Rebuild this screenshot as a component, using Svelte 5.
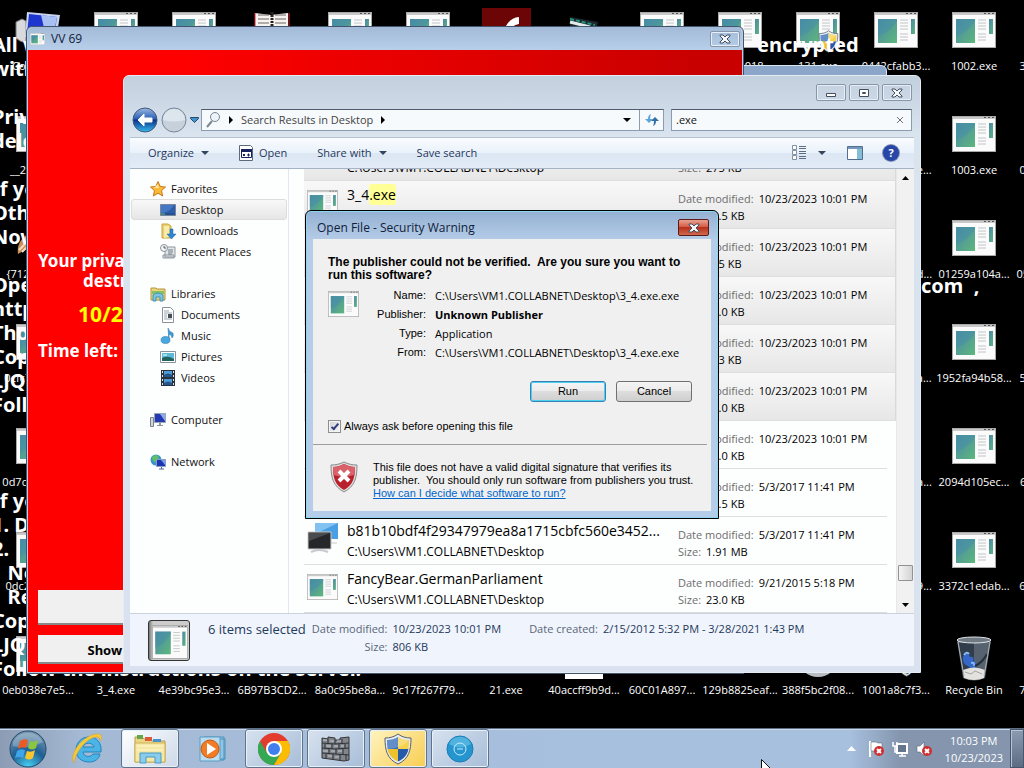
<script>
	let query = $state('.exe');
	let alwaysAsk = $state(true);

	const colWidth = 78;
	const rowHeight = 104;

	const desktopIcons = [
		{ col: 0, row: 0, label: 'Computer', kind: 'computer' },
		{ col: 1, row: 0, label: '', kind: 'exe' },
		{ col: 2, row: 0, label: '', kind: 'exe' },
		{ col: 3, row: 0, label: '', kind: 'notebook' },
		{ col: 4, row: 0, label: '', kind: 'exe' },
		{ col: 5, row: 0, label: '', kind: 'exe' },
		{ col: 6, row: 0, label: '', kind: 'flash' },
		{ col: 7, row: 0, label: '', kind: 'clapper' },
		{ col: 8, row: 0, label: '', kind: 'exe' },
		{ col: 9, row: 0, label: '..05-2018', kind: 'exe' },
		{ col: 10, row: 0, label: '131.exe', kind: 'admin' },
		{ col: 11, row: 0, label: '0442cfabb3...', kind: 'exe' },
		{ col: 12, row: 0, label: '1002.exe', kind: 'exe' },
		{ col: 13, row: 0, label: '31c46bb9a...', kind: 'exe' },
		{ col: 0, row: 1, label: '__2018.exe', kind: 'exe' },
		{ col: 11, row: 1, label: '0a71c5bd2e...', kind: 'exe' },
		{ col: 12, row: 1, label: '1003.exe', kind: 'exe' },
		{ col: 13, row: 1, label: '01c46bb9a...', kind: 'exe' },
		{ col: 0, row: 2, label: '{71257279...', kind: 'brush' },
		{ col: 11, row: 2, label: '0bd71c5b2d...', kind: 'exe' },
		{ col: 12, row: 2, label: '01259a104a...', kind: 'exe' },
		{ col: 13, row: 2, label: '05c46bb9a0...', kind: 'exe' },
		{ col: 0, row: 3, label: '0cfc71be52...', kind: 'exe' },
		{ col: 11, row: 3, label: '0e71c5bd2a...', kind: 'exe' },
		{ col: 12, row: 3, label: '1952fa94b58...', kind: 'exe' },
		{ col: 13, row: 3, label: '56c46bb9a...', kind: 'exe' },
		{ col: 0, row: 4, label: '0d7c71be52...', kind: 'exe' },
		{ col: 11, row: 4, label: '1b71c5bd2a...', kind: 'exe' },
		{ col: 12, row: 4, label: '2094d105ec...', kind: 'exe' },
		{ col: 13, row: 4, label: '6cc46bb9a...', kind: 'exe' },
		{ col: 0, row: 5, label: '0dc271be5...', kind: 'exe' },
		{ col: 11, row: 5, label: '2b71c5bda9...', kind: 'exe' },
		{ col: 12, row: 5, label: '3372c1edab...', kind: 'exe' },
		{ col: 13, row: 5, label: '6dc46bb9a...', kind: 'exe' },
		{ col: 0, row: 6, label: '0eb038e7e5...', kind: 'exe' },
		{ col: 1, row: 6, label: '3_4.exe', kind: 'exe' },
		{ col: 2, row: 6, label: '4e39bc95e3...', kind: 'exe' },
		{ col: 3, row: 6, label: '6B97B3CD2...', kind: 'exe' },
		{ col: 4, row: 6, label: '8a0c95be8a...', kind: 'exe' },
		{ col: 5, row: 6, label: '9c17f267f79...', kind: 'exe' },
		{ col: 6, row: 6, label: '21.exe', kind: 'exe' },
		{ col: 7, row: 6, label: '40accff9b9d...', kind: 'page' },
		{ col: 8, row: 6, label: '60C01A897...', kind: 'exe' },
		{ col: 9, row: 6, label: '129b8825eaf...', kind: 'exe' },
		{ col: 10, row: 6, label: '388f5bc2f08...', kind: 'disc' },
		{ col: 11, row: 6, label: '1001a8c7f3...', kind: 'admin' },
		{ col: 12, row: 6, label: 'Recycle Bin', kind: 'bin' },
		{ col: 13, row: 6, label: '7dc46bb9a...', kind: 'exe' }
	];

	const note = [
		'All w', 'with', '', 'Priv', 'dele', '', 'If yo', 'Othe', 'Now', '', 'Oper', 'http', 'Tho',
		'Cop', 'LJQ', 'Follo', '', '', '', 'If yo', '1. D', '2.', '   No', '   Re', 'Cop', 'LJQ',
		'Follow the instructions on the server.'
	].join('\n');

	const navGroups = [
		{ name: 'Favorites', icon: 'star', items: [
			{ name: 'Desktop', icon: 'desktop', current: true },
			{ name: 'Downloads', icon: 'downloads' },
			{ name: 'Recent Places', icon: 'recent' }
		] },
		{ name: 'Libraries', icon: 'libraries', items: [
			{ name: 'Documents', icon: 'documents' },
			{ name: 'Music', icon: 'music' },
			{ name: 'Pictures', icon: 'pictures' },
			{ name: 'Videos', icon: 'videos' }
		] },
		{ name: 'Computer', icon: 'computer', items: [] },
		{ name: 'Network', icon: 'network', items: [] }
	];

	const folder = 'C:\\Users\\VM1.COLLABNET\\Desktop';
	const files = [
		{ name: '21', date: '10/23/2023 10:01 PM', size: '275 KB', selected: true },
		{ name: '3_4', ext: '.exe', date: '10/23/2023 10:01 PM', size: '22.5 KB', selected: true },
		{ name: '131', ext: '.exe', date: '10/23/2023 10:01 PM', size: '315 KB', selected: true },
		{ name: '1002', ext: '.exe', date: '10/23/2023 10:01 PM', size: '64.0 KB', selected: true },
		{ name: '1003', ext: '.exe', date: '10/23/2023 10:01 PM', size: '303 KB', selected: true },
		{ name: '2018', ext: '.exe', date: '10/23/2023 10:01 PM', size: '68.0 KB', selected: true },
		{ name: 'VV', ext: '.exe', date: '10/23/2023 10:01 PM', size: '72.0 KB' },
		{ name: '6B97B3CD2', date: '5/3/2017 11:41 PM', size: '38.5 KB' },
		{ name: 'b81b10bdf4f29347979ea8a1715cbfc560e3452...', date: '5/3/2017 11:41 PM', size: '1.91 MB', icon: 'screens' },
		{ name: 'FancyBear.GermanParliament', date: '9/21/2015 5:18 PM', size: '23.0 KB' }
	];

	const details = [
		{ label: 'Name:', value: 'C:\\Users\\VM1.COLLABNET\\Desktop\\3_4.exe.exe' },
		{ label: 'Publisher:', value: 'Unknown Publisher', strong: true },
		{ label: 'Type:', value: 'Application' },
		{ label: 'From:', value: 'C:\\Users\\VM1.COLLABNET\\Desktop\\3_4.exe.exe' }
	];

	const tasks = [
		{ name: 'Internet Explorer', icon: 'ie' },
		{ name: 'Windows Explorer', icon: 'explorer', state: 'active' },
		{ name: 'Windows Media Player', icon: 'player' },
		{ name: 'Google Chrome', icon: 'chrome', state: 'open' },
		{ name: 'Firewall', icon: 'wall', state: 'open' },
		{ name: 'User Account Control', icon: 'shield', state: 'alert' },
		{ name: 'Clock', icon: 'clock', state: 'open' }
	];
</script>

{#snippet exe(width, height)}
	<svg {width} {height} viewBox="0 0 44 36" preserveAspectRatio="none" aria-hidden="true">
		<rect x="0.5" y="0.5" width="43" height="35" fill="#fbfbfb" stroke="#a9a9a9" />
		<path d="M1 1h42v2H1z" fill="#c9c9cb" />
		<path d="M32 1h2v1h-2zM36 1h2v1h-2zM40 1h2v1h-2z" fill="#555" />
		<rect x="4" y="7" width="19" height="24" fill="url(#exe-pic)" />
		<path d="M4 24Q16 20 23 9V7H4z" fill="#4690a8" opacity=".55" />
		<path d="M26 8h8M26 11h8M26 14h8M26 17h8M26 22h8M26 25h8M26 28h8" stroke="#c2c4c6" />
		<rect x="37" y="7" width="4" height="15" fill="url(#exe-pic)" />
	</svg>
{/snippet}

{#snippet shield(size)}
	<svg width={size} height={size} viewBox="0 0 32 32" aria-hidden="true">
		<path d="M16 1c4 3 8 4 13 4 0 12-2 21-13 26C5 26 3 17 3 5c5 0 9-1 13-4z" fill="#e8ecf2" stroke="#555f70" />
		<path d="M16 4v12H5.500C5 13 5 10 5 7c4 0 8-1 11-3z" fill="#2f68b8" />
		<path d="M16 4v12h10.500C27 13 27 10 27 7c-4 0-8-1-11-3z" fill="#f5d24c" />
		<path d="M16 16v12.500C10 26 7 22 5.500 16z" fill="#eec22f" />
		<path d="M16 16v12.500C22 26 25 22 26.500 16z" fill="#245aa8" />
		<path d="M5 7c4 0 8-1 11-3 3 2 7 3 11 3-4 6-14 9-22 9z" fill="#fff" opacity=".25" />
	</svg>
{/snippet}

{#snippet cross()}
	<svg width="12" height="10" viewBox="0 0 12 10" aria-hidden="true">
		<path d="M1 1h3l2 2 2-2h3v1L8 5l3 3v1H8L6 7 4 9H1V8l3-3-3-3z" fill="#f4f7fa" stroke="#434e60" />
	</svg>
{/snippet}

{#snippet desktopIcon(kind)}
	{#if kind === 'exe'}
		{@render exe(44, 36)}
	{:else if kind === 'admin'}
		{@render exe(44, 36)}
		<span class="overlay">{@render shield(23)}</span>
	{:else if kind === 'computer'}
		<svg width="46" height="36" viewBox="0 0 46 36">
			<path d="M1 10l6-3 4 2v22l-6-2-4-3z" fill="#d8dadd" stroke="#777" />
			<path d="M12 0l33 3-4 25-31-3z" fill="#c9d4ee" />
			<path d="M14 2l28 3-3 20-27-3z" fill="#1c36cf" />
			<path d="M26 3l16 2-3 16-9-1z" fill="#a9c0f2" />
		</svg>
	{:else if kind === 'notebook'}
		<svg width="36" height="40" viewBox="0 0 36 40">
			<path d="M1 1l16 2 17-2v38H1z" fill="#f6f3f0" />
			<path d="M1 1v38M35 1v38" stroke="#d42222" stroke-width="1" />
			<path d="M4 3h11M4 7h11M4 11h11M4 15h11M21 3h11M21 7h11M21 11h11M21 15h11" stroke="#6b6665" />
			<path d="M18 0v38" stroke="#222" stroke-width="3" stroke-dasharray="2 1" />
		</svg>
	{:else if kind === 'flash'}
		<svg class="raised" width="49" height="46" viewBox="0 0 49 46">
			<path d="M0 0h49v46H0z" fill="#6b0506" />
			<path d="M37 9v7q-8 1-9 8h6v6h-8q-3 12-14 12v-7q7 0 9-9 4-16 16-17z" fill="#fff" />
		</svg>
	{:else if kind === 'clapper'}
		<svg width="44" height="36" viewBox="0 0 44 36">
			<path d="M8 5l28 5-1 5H8z" fill="#1e2730" />
			<path d="M8 10l20 5" stroke="#e3ebea" stroke-width="3" />
			<path d="M8 7l25 6" stroke="#23967f" stroke-width="2" stroke-dasharray="4 2" />
		</svg>
	{:else if kind === 'brush'}
		<svg width="44" height="36" viewBox="0 0 44 36">
			<path d="M2 34Q0 22 12 14l4 12z" fill="#c98e58" />
			<path d="M3 30l10-10M6 32l8-8" stroke="#f3dcc0" stroke-width="2" />
		</svg>
	{:else if kind === 'page'}
		<svg width="38" height="43" viewBox="0 0 38 43"><path d="M0 0h38v43H0z" fill="#fff" /></svg>
	{:else if kind === 'disc'}
		<svg width="42" height="42" viewBox="0 0 42 42"><circle cx="21" cy="21" r="20" fill="#b9bdc2" /></svg>
	{:else if kind === 'bin'}
		<svg width="38" height="46" viewBox="0 0 38 46">
			<path d="M2 4h34l-6 38q-11 5-22 0z" fill="#5a6570" />
			<path d="M4 7h15v36q-7 0-10-2z" fill="#323d4b" />
			<path d="M19 8h14l-5 33-9 2z" fill="#56626f" />
			<ellipse cx="19" cy="4" rx="17" ry="3" fill="#6f7a84" stroke="#dfe4e8" />
			<path d="M8 21q4-8 7 0 5-1 3 4 5 0 3 7-5 2-8-2-6-2-5-9z" fill="#3467c8" />
			<path d="M9 19q3-4 5-1M16 27q4-1 3 3" stroke="#8ab6f1" stroke-width="2" fill="none" />
			<path d="M20 30q8-4 12-12" stroke="#252e3a" stroke-width="2" fill="none" />
			<path d="M8 34q11-5 22 0l-1 8q-10 4-20 0z" fill="#e4e2df" />
			<path d="M10 36l6 2 4-3 7 3" stroke="#a7a5a2" fill="none" />
			<path d="M3 6l6 34M35 6l-6 34" stroke="#aab2ba" />
		</svg>
	{/if}
{/snippet}

{#snippet navIcon(kind)}
	<svg width="16" height="16" viewBox="0 0 16 16" aria-hidden="true">
		{#if kind === 'star'}
			<path d="M8 .5l2.200 5 5.300.5-4 3.700 1.200 5.300L8 12.200 3.300 15l1.200-5.300-4-3.700 5.300-.5z" fill="#fbb938" stroke="#c8771a" />
			<path d="M8 3l1 4-5 0z" fill="#ffe9a0" />
		{:else if kind === 'desktop'}
			<path d="M.5 2.500h15v11H.5z" fill="#2d5cab" stroke="#75869c" />
			<path d="M1 11Q9 11 14 3H1z" fill="#4477c4" />
			<path d="M1 12h14" stroke="#22457d" /><path d="M1 12h4" stroke="#5dbf6a" />
		{:else if kind === 'downloads'}
			<path d="M2 1h6l3 2v12H2z" fill="#e9cf70" stroke="#c8a63d" />
			<path d="M4 3h5v11l-5 1z" fill="#f8eaa8" />
			<path d="M10 6h3v5h3l-4.500 5L7 11h3z" fill="#2e86d2" stroke="#1c62a8" stroke-width=".5" />
		{:else if kind === 'recent'}
			<path d="M5 3h10v10H5zM3 11h11v3H3z" fill="#e3e6e8" stroke="#8e979f" />
			<path d="M8 6h5M8 8h5M8 10h4" stroke="#6d7b88" />
			<circle cx="4" cy="4" r="3.500" fill="#f3f5f6" stroke="#8b949c" /><path d="M4 2v2h2" stroke="#555" fill="none" />
		{:else if kind === 'libraries'}
			<path d="M1 2h5l1 1h8v11H1z" fill="#ecd47b" stroke="#b49540" />
			<path d="M2 5h12v3H2z" fill="#86c163" />
			<path d="M3 15V9q5-4 10 0v6h-3v-4H6v4z" fill="#7cc6e3" stroke="#3e93b8" />
		{:else if kind === 'documents'}
			<path d="M2.500.5h8l3 3v12h-11z" fill="#fff" stroke="#88939e" />
			<path d="M4 4h5M4 6h8M4 8h3M4 10h3M4 12h8" stroke="#9aa5af" /><path d="M8 7h4v4H8z" fill="#45505b" />
		{:else if kind === 'music'}
			<path d="M8 0q1 4 5 5 1 3-1 5 0-3-3-4v6z" fill="#3f9bd8" stroke="#236ca5" stroke-width=".5" />
			<ellipse cx="5.500" cy="12" rx="4.500" ry="3.500" fill="#4aa8e0" stroke="#236ca5" stroke-width=".5" />
		{:else if kind === 'pictures'}
			<path d="M.5 2.500h15v11H.5z" fill="#fff" stroke="#87929d" />
			<path d="M2 4h12v8H2z" fill="#5cb9d8" /><path d="M2 12V9q6-3 12 1v2z" fill="#23635f" /><path d="M3 6h4" stroke="#fff" />
		{:else if kind === 'videos'}
			<path d="M1 0h14v16H1z" fill="#29313a" />
			<path d="M4 1h8v6H4zM4 9h8v6H4z" fill="#4f9bd5" /><path d="M4 5q4-3 8 0v2H4zM4 13q4-3 8 0v2H4z" fill="#23558a" />
			<path d="M2.500 1v14M13.500 1v14" stroke="#dfe4e8" stroke-dasharray="2 2" />
		{:else if kind === 'computer'}
			<path d="M.5 5.500h3v9h-3z" fill="#d3d7db" stroke="#7a838c" />
			<path d="M4.500 1.500h11v9h-11z" fill="#2439b4" stroke="#9aa5b5" /><path d="M10 2h5v7z" fill="#8ea9ec" />
			<path d="M7 13h6v1H7zM9 11h2v2H9z" fill="#8d969f" />
		{:else}
			<circle cx="6" cy="6" r="5.500" fill="#3a94c9" /><path d="M2 3q4-4 7 0-2 2-3 5-4 0-4-5z" fill="#5fc167" />
			<path d="M6.500 5.500h9v7h-9z" fill="#1b36b5" stroke="#8f9dc0" /><path d="M11 6h4v5z" fill="#7d9cea" />
			<path d="M9 15h5M11.500 13v2" stroke="#5566a0" />
		{/if}
	</svg>
{/snippet}

{#snippet taskIcon(kind)}
	{#if kind === 'ie'}
		<svg width="34" height="34" viewBox="0 0 34 34">
			<path d="M18 5C10 5 5 11 5 18s5 12 13 12c6 0 10-3 11-8h-7c-3 4-9 3-10-2h18C31 11 26 5 18 5zm-6 10c1-5 10-5 11 0z" fill="#4bb4e6" stroke="#2184bf" />
			<path d="M3 31C-3 22 13 1 28 2c3 1 3 4 1 7 0-3-1-4-3-4C16 5 4 21 3 31z" fill="#f5c93c" stroke="#d49d1d" stroke-width=".5" />
		</svg>
	{:else if kind === 'explorer'}
		<svg width="34" height="30" viewBox="0 0 34 30">
			<path d="M2 3h7l2 2h6l2 2h13v21H2z" fill="#ecd584" stroke="#b89b4a" />
			<path d="M4 1h6v4H4z" fill="#67a646" /><path d="M12 3h7v4h-7z" fill="#db5a38" /><path d="M20 5h8v3h-8z" fill="#4a91cf" />
			<path d="M2 9h30v19H2z" fill="#f6e7a4" stroke="#cdb15b" />
			<path d="M4 12h26M4 16h26" stroke="#fff7d0" />
			<path d="M7 29V19h21v10h-6v-6h-9v6z" fill="#8bcbec" stroke="#459cc7" />
		</svg>
	{:else if kind === 'player'}
		<svg width="28" height="28" viewBox="0 0 28 28">
			<path d="M6 2h20v23H6zM9 4h18v20H9z" fill="#8fc6e6" stroke="#4f90b8" />
			<path d="M2 2h20v24H2z" fill="#b9dcf0" stroke="#5b9cc4" />
			<circle cx="12" cy="14" r="9" fill="#f07c26" stroke="#c85911" /><path d="M9 8l9 6-9 6z" fill="#fff" />
		</svg>
	{:else if kind === 'chrome'}
		<svg width="32" height="32" viewBox="0 0 32 32">
			<circle cx="16" cy="16" r="16" fill="#e33b2e" />
			<path d="M2.100 8A16 16 0 0 0 16 32l7-12H9z" fill="#34a853" />
			<path d="M16 32A16 16 0 0 0 29.900 8H16l7 12z" fill="#fbbc05" />
			<circle cx="16" cy="16" r="8" fill="#fff" /><circle cx="16" cy="16" r="6" fill="#3f7fee" />
		</svg>
	{:else if kind === 'wall'}
		<svg width="30" height="26" viewBox="0 0 30 26">
			<path d="M1 2l6 1v-2l7 1v2h5V2l9-1v23l-5 1-22-3z" fill="#81868c" stroke="#333" />
			<path d="M1 7l13 1 14-1M1 12l13 1 14-1M1 17l13 1 14 1M7 3v5M14 4v4M21 3v5M4 8v5M11 8v5M18 8v5M24 8v5M8 13v5M15 13v5M22 13v5M5 18v5M12 18v6M19 18v6M25 18v6" stroke="#2e3136" fill="none" />
			<path d="M2 4h4M9 5h4M16 5h4M5 10h5M13 10h4M20 10h3M2 15h5M10 15h4M17 15h4M7 20h4M14 21h4" stroke="#c3c7cb" stroke-width="1" />
		</svg>
	{:else if kind === 'shield'}
		{@render shield(32)}
	{:else}
		<svg width="28" height="28" viewBox="0 0 28 28">
			<circle cx="14" cy="14" r="13" fill="#2595cf" stroke="#1b7db5" />
			<path d="M3 9a12 12 0 0 1 22 0q-11 7-22 0z" fill="#4fb2df" />
			<circle cx="14" cy="14" r="6" fill="none" stroke="#c9edfb" stroke-width="1" /><path d="M11 14h6" stroke="#c9edfb" />
		</svg>
	{/if}
{/snippet}

<svg class="defs" width="0" height="0" aria-hidden="true">
	<linearGradient id="exe-pic" x1="0" y1="0" x2="1" y2="1">
		<stop offset="0" stop-color="#4c86a8" /><stop offset="1" stop-color="#5db87c" />
	</linearGradient>
	<radialGradient id="orb" cx=".5" cy="1" r="1">
		<stop offset="0" stop-color="#49d3f5" /><stop offset=".5" stop-color="#1f5f93" /><stop offset="1" stop-color="#7f9db5" />
	</radialGradient>
	<linearGradient id="back" x1="0" y1="0" x2="0" y2="1">
		<stop offset="0" stop-color="#9db9e0" /><stop offset=".45" stop-color="#2a5fb4" />
		<stop offset=".5" stop-color="#0c3186" /><stop offset="1" stop-color="#36bdf0" />
	</linearGradient>
</svg>

<div class="screen">
	<main class="desktop">
		{#each desktopIcons as icon}
			<div class="shortcut" style="left: {icon.col * colWidth}px; top: {icon.row * rowHeight}px">
				<span class="picture">{@render desktopIcon(icon.kind)}</span>
				<span class="caption">{icon.label}</span>
			</div>
		{/each}
		<pre class="note">{note}</pre>
		<p class="note tail encrypted">encrypted</p>
		<p class="note tail com">com&nbsp; ,</p>

		<div class="window behind"></div>

		<section class="window ransom" aria-label="VV 69">
			<header class="titlebar">
				{@render exe(15, 12)}
				<h2>VV 69</h2>
				<button class="frame-button" aria-label="Close">{@render cross()}</button>
			</header>
			<div class="red">
				<p class="warning">Your private files will be<br /><span>destroyed on</span></p>
				<p class="deadline">10/27/2023</p>
				<p class="warning">Time left:</p>
				<button class="flat tall" aria-label="Files"></button>
				<button class="flat">Show files</button>
			</div>
		</section>

		<section class="window explorer" aria-label="Search Results in Desktop">
			<header class="controls">
				<button class="frame-button" aria-label="Minimize">
					<svg width="12" height="10" viewBox="0 0 12 10"><path d="M1.500 5.500h9v3h-9z" fill="#fff" stroke="#434e60" /></svg>
				</button>
				<button class="frame-button" aria-label="Maximize">
					<svg width="12" height="10" viewBox="0 0 12 10"><path d="M1.500 1.500h9v7h-9zM4.500 4.500h3v1h-3z" fill="#fff" stroke="#434e60" /></svg>
				</button>
				<button class="frame-button" aria-label="Close">{@render cross()}</button>
			</header>

			<div class="location">
				<div class="history">
					<button aria-label="Back">
						<svg width="26" height="26" viewBox="0 0 26 26">
							<circle cx="13" cy="13" r="12" fill="url(#back)" stroke="#40577e" />
							<path d="M6 13l6-6v4h8v4h-8v4z" fill="#fff" stroke="#fff" />
						</svg>
					</button>
					<button aria-label="Forward">
						<svg width="26" height="26" viewBox="0 0 26 26">
							<circle cx="13" cy="13" r="12" fill="#c7d1dc" stroke="#76879b" />
							<path d="M2 13a11 11 0 0 1 22 0q-11 3-22 0z" fill="#dde5ed" />
						</svg>
					</button>
					<button aria-label="Recent pages">
						<svg width="9" height="6" viewBox="0 0 9 6"><path d="M.5.5h8v1l-4 4-4-4z" fill="#3d96cf" stroke="#27486b" /></svg>
					</button>
				</div>
				<div class="address">
					<svg width="16" height="18" viewBox="0 0 16 18"><circle cx="10" cy="6" r="4.500" fill="#edf3f8" stroke="#7b8794" /><path d="M7 10l-5 6" stroke="#7b8794" stroke-width="2" /></svg>
					<svg width="4" height="8" viewBox="0 0 4 8"><path d="M0 0l4 4-4 4z" /></svg>
					<span>Search Results in Desktop</span>
					<svg width="4" height="8" viewBox="0 0 4 8"><path d="M0 0l4 4-4 4z" /></svg>
					<button class="drop" aria-label="Previous locations"><svg width="8" height="4" viewBox="0 0 8 4"><path d="M0 0h8L4 4z" /></svg></button>
					<button class="refresh" aria-label="Refresh">
						<svg width="14" height="14" viewBox="0 0 14 14"><path d="M6 1Q3 2 3 6H0l4 4 4-4H5Q5 3 6 1z" fill="#5ba3dc" /><path d="M8 13q3-1 3-5h3l-4-4-4 4h3q0 3-1 5z" fill="#2f6fa8" /></svg>
					</button>
				</div>
				<div class="search">
					<input type="text" aria-label="Search" bind:value={query} />
					<button aria-label="Clear search" onclick={() => (query = '')}>
						<svg width="8" height="8" viewBox="0 0 8 8"><path d="M1 1l6 6M7 1L1 7" stroke="#69727c" /></svg>
					</button>
				</div>
			</div>

			<div class="toolbar">
				<button class="organize">Organize <i></i></button>
				<button class="open">
					<svg width="15" height="16" viewBox="0 0 15 16"><path d="M.5.5h11l2 2v13H.5z" fill="#fff" stroke="#5d6a79" /><path d="M2.500 4.500h10v8h-10z" fill="#fff" stroke="#15235e" /><path d="M2 4h11v3H2z" fill="#15235e" /><path d="M4 10l1-1 1 1-1 1zM9 9h1v2H9z" fill="#15235e" stroke="#15235e" /></svg>
					Open
				</button>
				<button class="share">Share with <i></i></button>
				<button>Save search</button>
				<button class="view" aria-label="Change your view">
					<svg width="14" height="16" viewBox="0 0 14 16"><path d="M.5.5h4v4h-4zM.5 5.500h4v4h-4zM.5 10.500h4v4h-4z" fill="#fff" stroke="#8390a2" /><path d="M7 1.500h7M7 3.500h7M7 6.500h7M7 8.500h7M7 11.500h7M7 13.500h7" stroke="#5e6c84" /></svg>
					<i></i>
				</button>
				<button class="pane" aria-label="Show the preview pane">
					<svg width="16" height="14" viewBox="0 0 16 14"><path d="M.5.5h15v13H.5z" fill="#fff" stroke="#516e8e" /><path d="M1 1h14v2H1z" fill="#7398bd" /><path d="M10 3h5v10h-5z" fill="#83bfd4" /></svg>
				</button>
				<button class="help" aria-label="Get help">?</button>
			</div>

			<div class="body">
				<nav>
					{#each navGroups as group}
						<ul>
							<li><a href="#{group.name}">{@render navIcon(group.icon)}{group.name}</a></li>
							{#each group.items as item}
								<li><a href="#{item.name}" class="child" class:current={item.current}>{@render navIcon(item.icon)}{item.name}</a></li>
							{/each}
						</ul>
					{/each}
				</nav>

				<div class="files">
					{#each files as file}
						<article class:selected={file.selected}>
							{#if file.icon === 'screens'}
								<svg width="32" height="32" viewBox="0 0 32 32"><path d="M8 1h23v16H8z" fill="#4a9fe4" /><path d="M8 1h23L8 12z" fill="#81c2f2" /><path d="M24 18v3h6" stroke="#c9c9c9" fill="none" /><path d="M1 10h23v17H1z" fill="#25272a" stroke="#ccc" /><path d="M2 11h21L2 19z" fill="#494b4f" /><path d="M4 30q8-4 17 0" stroke="#c6cacf" stroke-width="2" fill="none" /></svg>
							{:else}
								<span class="thumbnail">{@render exe(31, 26)}</span>
							{/if}
							<div class="title">
								<h3>{file.name}{#if file.ext}<mark>{file.ext}</mark>{/if}</h3>
								<p>{folder}</p>
							</div>
							<div class="meta">
								<p><span>Date modified:</span>{file.date}</p>
								<p><span>Size:</span>{file.size}</p>
							</div>
						</article>
					{/each}
				</div>

				<div class="scroll">
					<button aria-label="Scroll up"><svg width="7" height="4" viewBox="0 0 7 4"><path d="M0 4h7L3.500 0z" /></svg></button>
					<div class="thumb"></div>
					<button aria-label="Scroll down"><svg width="7" height="4" viewBox="0 0 7 4"><path d="M0 0h7L3.500 4z" /></svg></button>
				</div>
			</div>

			<footer class="summary">
				<div class="stack">{@render exe(36, 34)}</div>
				<strong>6 items selected</strong>
				<dl>
					<dt>Date modified:</dt><dd>10/23/2023 10:01 PM</dd>
					<dt>Size:</dt><dd>806 KB</dd>
				</dl>
				<dl>
					<dt>Date created:</dt><dd>2/15/2012 5:32 PM - 3/28/2021 1:43 PM</dd>
				</dl>
			</footer>
		</section>

		<div class="dialog" role="dialog" aria-label="Open File - Security Warning">
			<header>
				<h2>Open File - Security Warning</h2>
				<button aria-label="Close dialog">{@render cross()}</button>
			</header>
			<div class="panel">
				<h1>The publisher could not be verified.&nbsp; Are you sure you want to run this software?</h1>
				<div class="about">
					{@render exe(31, 26)}
					<dl>
						{#each details as row}
							<dt>{row.label}</dt>
							<dd class:strong={row.strong}>{row.value}</dd>
						{/each}
					</dl>
				</div>
				<div class="actions">
					<button class="default">Run</button>
					<button>Cancel</button>
				</div>
				<label><input type="checkbox" bind:checked={alwaysAsk} />Always ask before opening this file</label>
				<div class="advice">
					<svg width="28" height="32" viewBox="0 0 28 32" aria-hidden="true">
						<path d="M14 1c4 2 8 3 13 3 0 13-2 21-13 27C3 25 1 17 1 4c5 0 9-1 13-3z" fill="#dcdcdc" stroke="#8b8b8b" />
						<path d="M14 3c4 2 7 3 11 3 0 11-2 18-11 23C5 24 3 17 3 6c4 0 7-1 11-3z" fill="#b9202b" />
						<path d="M14 3c4 2 7 3 11 3 0 4 0 6-1 8-7 2-14 2-20 0-1-2-1-4-1-8 4 0 7-1 11-3z" fill="#d9616a" />
						<path d="M9 10l10 10M19 10L9 20" stroke="#fff" stroke-width="4" />
					</svg>
					<p>
						This file does not have a valid digital signature that verifies its publisher.&nbsp; You should only run software from publishers you trust.<br />
						<a href="#decide">How can I decide what software to run?</a>
					</p>
				</div>
			</div>
		</div>
	</main>

	<footer class="taskbar">
		<button class="start" aria-label="Start">
			<svg width="38" height="38" viewBox="0 0 38 38">
				<circle cx="19" cy="19" r="18" fill="url(#orb)" stroke="#244a6b" />
				<path d="M4 12a17 17 0 0 1 30 0q-15 8-30 4z" fill="#fff" opacity=".25" />
				<path d="M11 11q4-3 8-1l-2 8q-4-2-8 1z" fill="#ec5a24" />
				<path d="M21 11q4 2 8-1l-2 8q-4 3-8 0z" fill="#8cc63e" />
				<path d="M8 21q4-3 8-1l-2 8q-4-2-8 0z" fill="#3fa4e8" />
				<path d="M18 21q4 2 8-1l-2 8q-4 3-8 0z" fill="#fbc52d" />
			</svg>
		</button>
		{#each tasks as task}
			<button class="task {task.state ?? ''}" aria-label={task.name}>{@render taskIcon(task.icon)}</button>
		{/each}
		<div class="tray">
			<svg width="9" height="5" viewBox="0 0 9 5"><path d="M0 5h9L4.500 0z" fill="#fff" /></svg>
			<svg width="17" height="16" viewBox="0 0 17 16"><path d="M2 0v16" stroke="#fff" stroke-width="2" /><path d="M3 1h5l2 1h4v8H3z" fill="#fff" stroke="#4b596b" stroke-width=".5" /><circle cx="11" cy="10" r="5" fill="#cf2e2e" /><path d="M9 8l4 4M13 8l-4 4" stroke="#fff" stroke-width="2" /></svg>
			<svg width="17" height="16" viewBox="0 0 17 16"><path d="M5 3h10v9H5z" fill="#65768c" stroke="#fff" stroke-width="2" /><path d="M7 15h7M10 12v3M1 1v4h4V1M3 5v6h2" stroke="#fff" fill="none" stroke-width="1.500" /></svg>
			<svg width="17" height="16" viewBox="0 0 17 16"><path d="M1 5h3l4-4v14l-4-4H1z" fill="#fff" stroke="#4b596b" stroke-width=".5" /><circle cx="11" cy="10" r="5" fill="#cf2e2e" /><path d="M9 8l4 4M13 8l-4 4" stroke="#fff" stroke-width="2" /></svg>
			<time datetime="2023-10-23T22:03">10:03 PM<br />10/23/2023</time>
			<button class="peek" aria-label="Show desktop"></button>
		</div>
	</footer>

	<svg class="cursor" width="12" height="19" viewBox="0 0 12 19" aria-hidden="true"><path d="M.5.5v15l4-3 3 6 2-1-3-6h5z" fill="#fff" stroke="#111" /></svg>
</div>

<style>
	:global(body) {
		margin: 0;
		background: #000;
	}
	.screen {
		position: relative;
		display: flex;
		flex-direction: column;
		height: 100vh;
		overflow: hidden;
		font: 11px/16px "Open Sans", "Noto Sans", sans-serif;
		color: #000;
	}
	.screen :global(svg) {
		display: block;
		flex-shrink: 0;
	}
	.defs {
		position: absolute;
	}
	button {
		display: flex;
		align-items: center;
		justify-content: center;
		padding: 0;
		border: 0;
		background: none;
		font: inherit;
		color: inherit;
	}
	h1, h2, h3, p, ul, dl, dd, pre {
		margin: 0;
		padding: 0;
		font-weight: 400;
	}
	h2 {
		font-size: 12px;
		color: #10203a;
	}
	ul {
		list-style: none;
	}

	.desktop {
		position: relative;
		flex: 1;
		min-height: 0;
		overflow: hidden;
		background: #000;
	}
	.shortcut {
		position: absolute;
		display: flex;
		flex-direction: column;
		align-items: center;
		width: 76px;
		padding-top: 12px;
		color: #fff;
		white-space: nowrap;
	}
	.picture {
		position: relative;
		display: flex;
		justify-content: center;
		height: 46px;
	}
	.raised {
		margin-top: -4px;
	}
	.overlay {
		position: absolute;
		right: 0;
		top: 18px;
	}
	.note {
		position: absolute;
		left: -8px;
		top: 33px;
		color: #fff;
		font: bold 20px/24px "Noto Sans", sans-serif;
	}
	.encrypted {
		left: 757px;
		top: 33px;
	}
	.com {
		left: 921px;
		top: 274px;
	}

	.window {
		position: absolute;
		box-sizing: border-box;
		border: 1px solid #44566c;
		border-radius: 6px 6px 0 0;
		background: #dbe5f0;
	}
	.ransom {
		left: 26px;
		right: 280px;
		top: 26px;
		bottom: 54px;
		display: flex;
		flex-direction: column;
		padding: 0 1px 1px;
		background: #b9cde6;
	}
	.titlebar {
		display: flex;
		align-items: center;
		gap: 6px;
		height: 23px;
		padding: 0 2px;
		background: linear-gradient(#a3bad8, #b8cfea);
		border-radius: 6px 6px 0 0;
	}
	.titlebar .frame-button {
		margin-left: auto;
		height: 16px;
	}
	.frame-button {
		width: 30px;
		height: 17px;
		border: 1px solid #8795a8;
		border-radius: 2px;
		box-shadow: inset 0 0 0 1px #e6eef6;
	}
	.red {
		flex: 1;
		display: flex;
		flex-direction: column;
		padding: 201px 10px 8px;
		background: linear-gradient(90deg, #f00 20%, #c80000 95%);
		color: #fff;
		font: bold 17px/20px "Noto Sans", sans-serif;
	}
	.red p {
		font-weight: 700;
	}
	.warning span {
		padding-left: 45px;
	}
	.red .deadline {
		padding: 11px 0 15px 40px;
		color: #ff0;
		font-size: 21px;
		line-height: 24px;
	}
	.flat {
		height: 29px;
		width: 164px;
		background: #f0f0f0;
		color: #000;
		font: bold 13px/16px "Noto Sans", sans-serif;
		box-shadow: inset 0 -2px #888;
	}
	.tall {
		height: 35px;
		margin: auto 0 10px;
	}
	.behind {
		left: 600px;
		right: 137px;
		top: 65px;
		height: 30px;
		background: #8ba6c9;
		border-color: #d8e6f4;
	}

	.explorer {
		left: 123px;
		right: 103px;
		top: 75px;
		bottom: 55px;
		display: flex;
		flex-direction: column;
		padding: 0 6px 6px;
		border-color: #e4edf6;
		background: linear-gradient(#c2cfdd, #d9e4ef 60px, #d9e2ee);
	}
	.controls {
		display: flex;
		justify-content: flex-end;
		gap: 3px;
		padding: 8px 2px 6px;
	}
	.location {
		display: flex;
		align-items: center;
		height: 26px;
		margin-bottom: 4px;
		padding: 0 2px;
	}
	.history {
		display: flex;
		gap: 3px;
		width: 69px;
	}
	.address, .search {
		box-sizing: border-box;
		display: flex;
		align-items: center;
		height: 22px;
		border: 1px solid #8c9bad;
		border-top-color: #4f5c6d;
		background: #f7fafd;
		color: #444;
	}
	.address {
		flex: 1;
		gap: 8px;
		padding-left: 3px;
	}
	.drop {
		margin-left: auto;
	}
	.refresh {
		width: 24px;
		height: 20px;
		border-left: 1px solid #8c9bad;
	}
	.search {
		width: 241px;
		margin-left: 7px;
		padding: 0 7px 0 4px;
	}
	.search input {
		flex: 1;
		min-width: 0;
		padding: 0;
		border: 0;
		outline: 0;
		background: none;
		font: inherit;
		color: #111;
	}
	.toolbar {
		display: flex;
		align-items: center;
		height: 30px;
		padding: 0 15px 0 18px;
		border-bottom: 1px solid #a5b3c6;
		border-top: 1px solid #b5c2d2;
		background: linear-gradient(#f9fcff, #eaf1fa 50%, #dce7f4 50%, #e2ebf6);
		color: #1e395b;
	}
	.toolbar i {
		margin-left: 7px;
		border: 4px solid transparent;
		border-top-color: #34465e;
		border-bottom: 0;
	}
	.organize, .open, .share {
		margin-right: 30px;
	}
	.open {
		gap: 5px;
	}
	.view {
		margin-left: auto;
	}
	.view i {
		margin-left: 12px;
	}
	.pane {
		margin: 0 20px 0 21px;
	}
	.help {
		width: 16px;
		height: 16px;
		border-radius: 50%;
		background: #2746a8;
		box-shadow: 0 0 0 1px #8493b4;
		color: #fff;
		font-weight: 700;
	}

	.body {
		flex: 1;
		display: flex;
		min-height: 0;
		background: #fdfefe;
	}
	nav {
		box-sizing: border-box;
		width: 159px;
		padding: 9px 1px;
		border-right: 1px solid #dfe7f0;
	}
	nav ul {
		margin-bottom: 21px;
	}
	nav a {
		box-sizing: border-box;
		display: flex;
		align-items: center;
		gap: 5px;
		height: 21px;
		padding-left: 19px;
		color: #111;
		text-decoration: none;
	}
	nav .child {
		padding-left: 29px;
	}
	nav .current {
		padding-left: 28px;
		border: 1px solid #dcdcdc;
		border-radius: 3px;
		background: linear-gradient(#f8f8f8, #e6e6e6);
	}
	.files {
		flex: 1;
		min-width: 0;
		display: flex;
		flex-direction: column;
		justify-content: flex-end;
		margin-left: 15px;
		overflow: hidden;
	}
	article {
		box-sizing: border-box;
		flex-shrink: 0;
		display: flex;
		align-items: flex-start;
		height: 48px;
		margin-right: 9px;
		padding: 5px 3px 0;
		border-bottom: 1px solid #dedede;
	}
	article.selected {
		margin-right: 0;
		padding-right: 11px;
		border-right: 1px solid #d9d9d9;
		background: linear-gradient(#f8f8f8, #e7e7e7);
	}
	.thumbnail {
		width: 32px;
		padding-top: 4px;
	}
	.title {
		flex: 1;
		min-width: 0;
		padding-left: 8px;
		white-space: nowrap;
	}
	.title h3 {
		font-size: 14px;
		line-height: 18px;
	}
	.title p {
		padding-top: 4px;
		font-size: 12px;
	}
	mark {
		padding: 1px 0;
		border-radius: 3px;
		background: #ffff96;
	}
	.meta {
		width: 206px;
		padding-top: 4px;
		line-height: 17px;
		white-space: nowrap;
	}
	.meta span {
		margin-right: 5px;
		color: #6d6d6d;
	}
	.scroll {
		display: flex;
		flex-direction: column;
		width: 17px;
		border-left: 1px solid #e8e8e8;
		background: #f1f1f1;
	}
	.scroll button {
		height: 17px;
	}
	.thumb {
		height: 14px;
		margin: auto 1px 15px;
		border: 1px solid #929292;
		border-radius: 1px;
		background: linear-gradient(90deg, #f4f4f4, #d4d4d4);
	}
	.summary {
		display: flex;
		align-items: flex-start;
		box-sizing: border-box;
		height: 53px;
		padding: 6px 18px;
		border-top: 1px solid #c9d3df;
		background: #f0f4fc;
		color: #1e395b;
		white-space: nowrap;
	}
	.stack {
		padding: 4px 1px 1px 3px;
		border: 1px solid #333;
		border-radius: 3px;
		background: linear-gradient(90deg, #777, #ccc 4px);
	}
	.summary strong {
		padding: 0 6px 0 18px;
		font-size: 13px;
		line-height: 18px;
		font-weight: 400;
	}
	.summary dl {
		display: grid;
		grid-template-columns: auto auto;
		column-gap: 5px;
		margin-right: 28px;
		line-height: 18px;
	}
	.summary dt {
		color: #5a6779;
		text-align: right;
	}

	.dialog {
		position: absolute;
		left: 305px;
		top: 210px;
		box-sizing: border-box;
		width: 414px;
		padding: 0 7px 7px;
		border: 1px solid #000;
		border-radius: 6px 6px 0 0;
		background: linear-gradient(#94b0d2, #b5cde8 30px, #b5cde8);
		box-shadow: inset 0 0 0 1px #8ed6f0;
		font: 11px/13px "Liberation Sans", Arial, sans-serif;
	}
	.dialog header {
		display: flex;
		align-items: center;
		justify-content: space-between;
		height: 28px;
		padding: 0 2px 0 4px;
	}
	.dialog h2 {
		padding-top: 6px;
		font: 12px/16px "Open Sans", "Noto Sans", sans-serif;
	}
	.dialog header button {
		width: 31px;
		height: 17px;
		margin-top: 5px;
		border: 1px solid #5c1a1a;
		border-radius: 2px;
		background: linear-gradient(#e8a292, #d3553e 50%, #b9311a 50%, #cf6a4d);
	}
	.panel {
		padding: 17px 0 11px;
		background: #f0f0f0;
	}
	.panel h1 {
		padding: 0 20px 0 15px;
		font: bold 12px/13px "Liberation Sans", Arial, sans-serif;
	}
	.about {
		display: flex;
		padding: 4px 15px 0;
	}
	.about > :global(svg) {
		margin-top: 5px;
	}
	.about dl {
		display: grid;
		grid-template-columns: 67px auto;
		column-gap: 9px;
		line-height: 19px;
	}
	.about dt {
		text-align: right;
	}
	.about dd {
		font: 11px/19px "Open Sans", "Noto Sans", sans-serif;
	}
	.about .strong {
		font-weight: 700;
	}
	.actions {
		display: flex;
		justify-content: flex-end;
		gap: 10px;
		padding: 19px 19px 16px;
	}
	.actions button {
		width: 76px;
		height: 21px;
		border: 1px solid #707070;
		border-radius: 3px;
		background: linear-gradient(#f4f4f4, #ebebeb 50%, #ddd 50%, #cfcfcf);
	}
	.actions .default {
		border-color: #3c7fb1;
		box-shadow: inset 0 0 0 1px #48d1f2;
	}
	.panel label {
		display: flex;
		align-items: center;
		gap: 3px;
		padding: 2px 15px 11px;
	}
	.panel input {
		appearance: none;
		position: relative;
		width: 13px;
		height: 13px;
		margin: 0;
		border: 1px solid #8e8f8f;
		background: linear-gradient(135deg, #cfd3d8, #f6f6f6);
		box-shadow: inset 0 0 0 1px #f4f4f4;
	}
	.panel input:checked::after {
		content: "";
		position: absolute;
		left: 4px;
		top: 1px;
		width: 2px;
		height: 6px;
		border: solid #313c78;
		border-width: 0 2px 2px 0;
		transform: rotate(40deg);
	}
	.advice {
		display: flex;
		gap: 15px;
		margin-right: 4px;
		padding: 16px 6px 0 17px;
		border-top: 1px solid #9d9d9d;
	}
	.advice a {
		color: #06c;
	}

	.taskbar {
		box-sizing: border-box;
		display: flex;
		height: 40px;
		gap: 4px;
		border-top: 1px solid #5e6f86;
		background: linear-gradient(90deg, #8c9cb4, #a4b9d4 8%, #a7c0de 55%, #a7c0de 83%, #8495ad 88%, #8495ad);
		box-shadow: inset 0 1px #cbd8e8;
	}
	.start {
		width: 55px;
	}
	.task {
		width: 58px;
		border-radius: 3px;
	}
	.active, .open.task, .alert {
		border: 1px solid #5f738d;
		box-shadow: inset 0 0 0 1px #e8f0f8;
		background: linear-gradient(135deg, #d7e2ef, #a7bdd8);
	}
	.open.task {
		margin: 0;
	}
	.task.active {
		background: linear-gradient(135deg, #fff, #ccd9e8);
	}
	.task.alert {
		background: linear-gradient(135deg, #fff4c0, #f8cd52);
	}
	.tray {
		display: flex;
		align-items: center;
		gap: 7px;
		margin-left: auto;
		color: #fff;
		text-align: center;
	}
	.tray > :global(:first-child) {
		margin-right: 5px;
	}
	.tray time {
		padding-left: 5px;
		line-height: 17px;
	}
	.peek {
		align-self: stretch;
		width: 14px;
		border: 1px solid #47566b;
		background: linear-gradient(#8c9bb0, #5c6c84);
		box-shadow: inset 1px 1px #b8c4d4;
	}
	.cursor {
		position: absolute;
		left: 761px;
		top: 759px;
	}
</style>
